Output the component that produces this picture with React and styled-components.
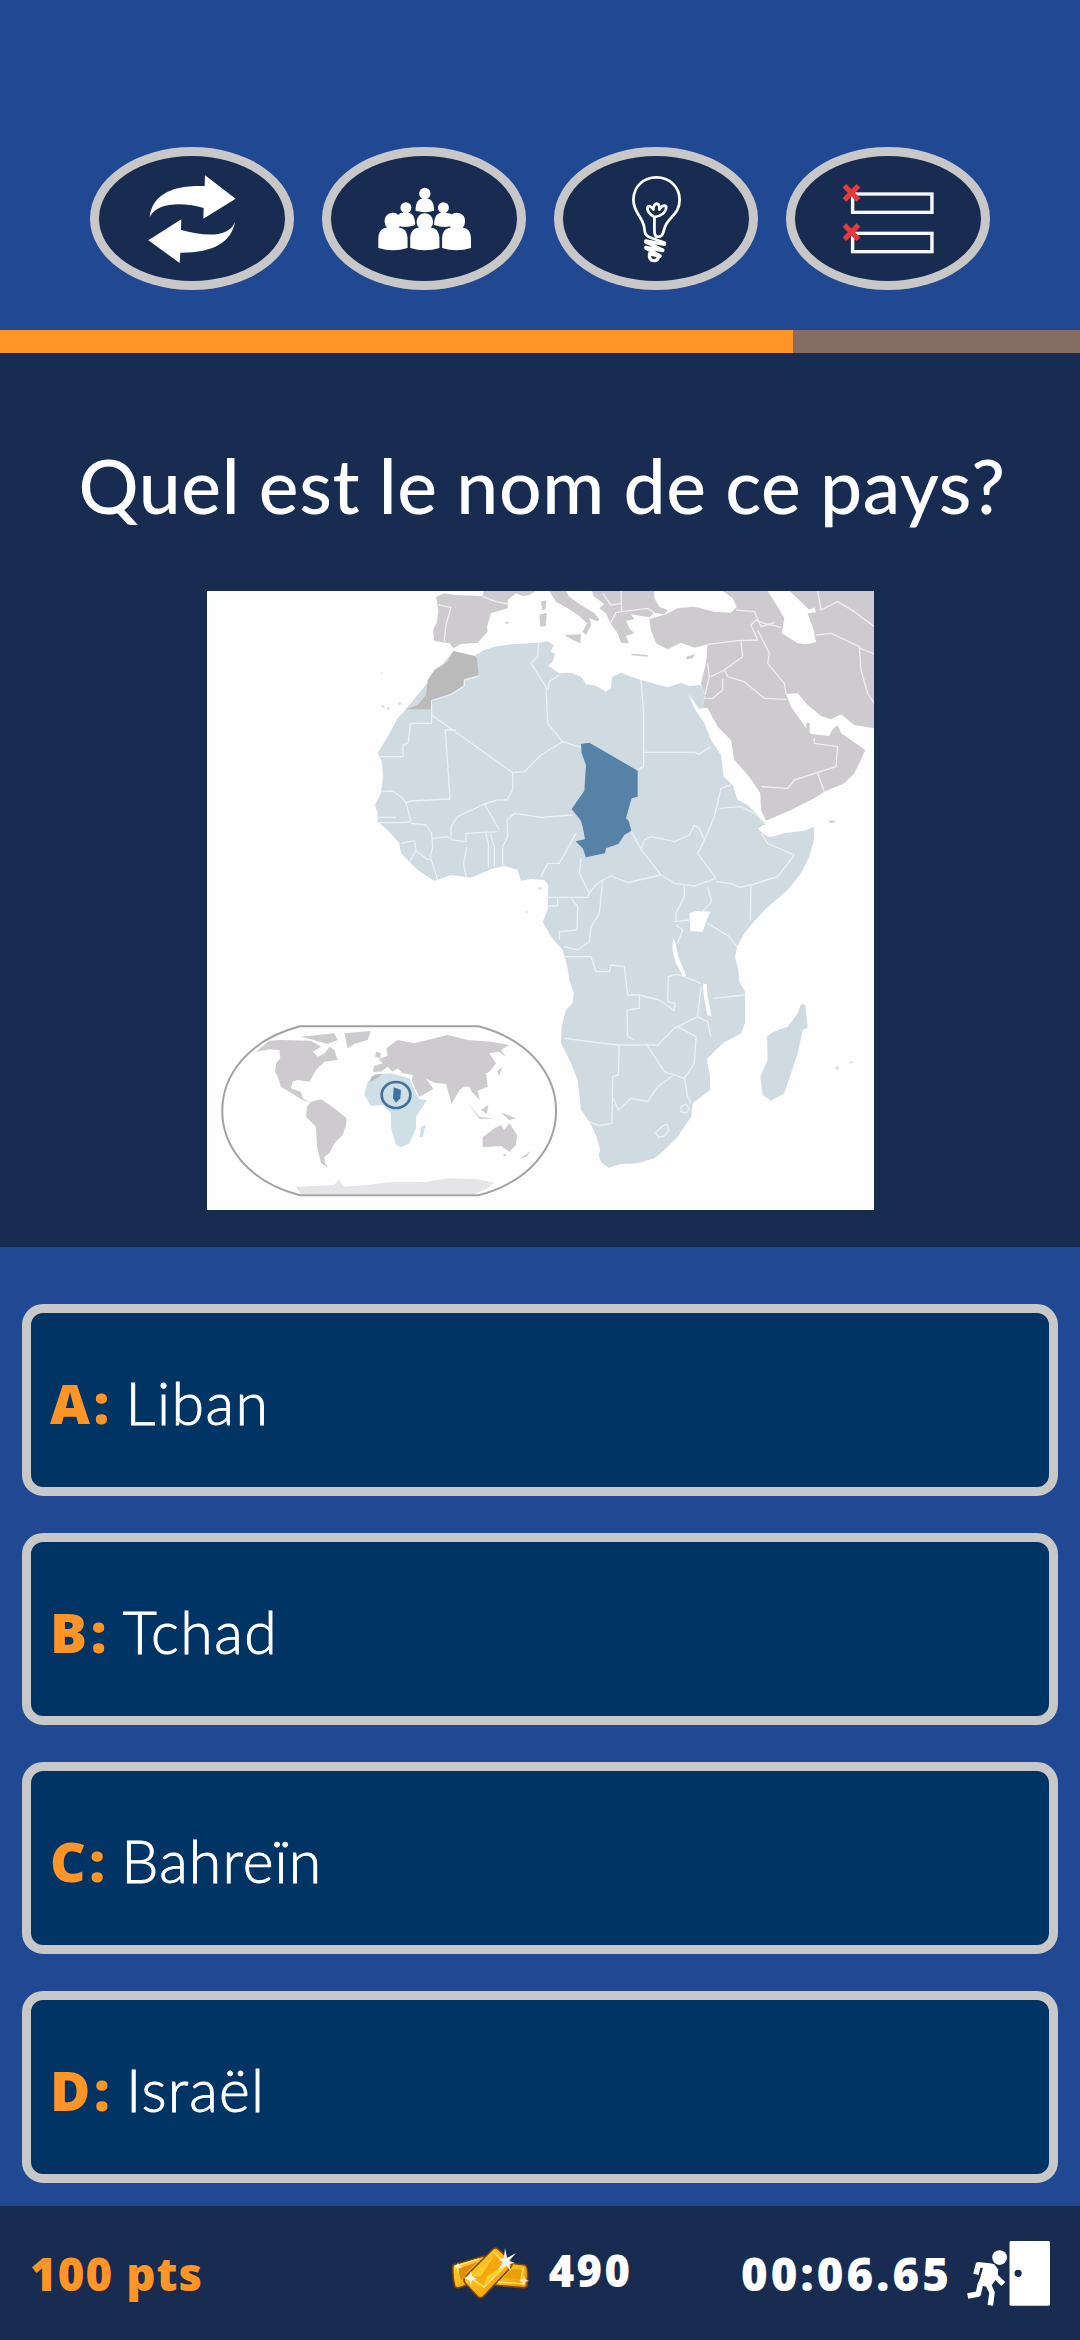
import React from "react";
import styled, { createGlobalStyle } from "styled-components";

const colors = {
  blue: "#214892",
  navy: "#182b50",
  panel: "#003465",
  silver: "#c8c8c8",
  orange: "#ff9427",
  track: "#866d63",
};

const GlobalStyle = createGlobalStyle`
  *, *::before, *::after { box-sizing: border-box; }
  body {
    margin: 0;
    background: ${colors.blue};
    font-family: Lato, "Open Sans", sans-serif;
    color: #fff;
  }
`;

const Screen = styled.main`
  width: 1080px;
  height: 2340px;
  display: flex;
  flex-direction: column;
  overflow: hidden;
  background: ${colors.blue};
`;

const Lifelines = styled.header`
  height: 330px;
  padding-top: 147px;
  display: flex;
  justify-content: center;
  align-items: flex-start;
  gap: 28px;
`;

const LifelineButton = styled.button`
  width: 204px;
  height: 143px;
  padding: 0;
  display: flex;
  align-items: center;
  justify-content: center;
  border: 9px solid ${colors.silver};
  border-radius: 50%;
  background: ${colors.navy};
`;

const Glyph = styled.svg`
  display: block;
  flex: none;
  width: ${(p) => p.$w}px;
  height: ${(p) => p.$h}px;
`;

const TimeTrack = styled.div`
  height: 23px;
  background: ${colors.track};
`;

const TimeFill = styled.div`
  height: 100%;
  background: ${colors.orange};
`;

const Question = styled.section`
  height: 894px;
  padding-top: 87px;
  display: flex;
  flex-direction: column;
  align-items: center;
  gap: 61px;
  background: ${colors.navy};
`;

const QuestionText = styled.h1`
  margin: 0;
  padding-left: 4px;
  font-size: 75px;
  font-weight: 500;
  line-height: 90px;
  letter-spacing: 0.65px;
  word-spacing: -1px;
  white-space: nowrap;
`;

const MapPicture = styled.svg`
  display: block;
  width: 667px;
  height: 619px;
  background: #fefefe;
`;

const Answers = styled.section`
  flex: 1;
  padding: 57px 22px 0;
  display: flex;
  flex-direction: column;
  gap: 37px;
`;

const AnswerButton = styled.button`
  height: 192px;
  padding: 5px 19px 0;
  display: flex;
  align-items: center;
  gap: 12.5px;
  border: 9px solid ${colors.silver};
  border-radius: 21px;
  background: ${colors.panel};
  color: #fff;
  font-family: inherit;
  text-align: left;
`;

const Letter = styled.span`
  color: ${colors.orange};
  font-family: "Open Sans", sans-serif;
  font-size: 55px;
  font-weight: 800;
  line-height: 70px;
  letter-spacing: 3.6px;
`;

const AnswerText = styled.span`
  font-size: 59px;
  font-weight: 300;
  line-height: 70px;
  letter-spacing: ${(p) => p.$tracking}px;
  -webkit-text-stroke: 0.9px #fff;
`;

const StatusBar = styled.footer`
  height: 134px;
  padding: 0 30px;
  display: grid;
  grid-template-columns: 1fr auto 1fr;
  align-items: center;
  background: ${colors.navy};
  font-family: "Open Sans", sans-serif;
  font-weight: 800;
  line-height: 56px;
`;

const Points = styled.span`
  color: ${colors.orange};
  font-size: 45.5px;
  letter-spacing: 1.1px;
`;

const Gold = styled.div`
  padding-left: 3px;
  display: flex;
  align-items: center;
  gap: 20px;
`;

const GoldAmount = styled.span`
  margin-top: -4px;
  font-size: 43.5px;
  letter-spacing: 2.4px;
`;

const TimeAndExit = styled.div`
  justify-self: end;
  display: flex;
  align-items: center;
  gap: 15px;
`;

const Timer = styled.span`
  font-size: 45.5px;
  letter-spacing: 3.1px;
`;

function SwapIcon() {
  return (
    <Glyph $w={92} $h={90} viewBox="199 130 276 270" fill="#fff">
      <path d="M210 259C218 195 270 163 375 166L376 134L468 204L371 264L372 232C320 216 235 210 210 259Z" />
      <path d="M466 274C455 335 400 367 302 366L300 397L206 329L305 266L304 298C370 315 445 325 466 274Z" />
    </Glyph>
  );
}

function CrowdIcon() {
  return (
    <Glyph $w={95} $h={66} viewBox="890 166 286 198" fill="#fff">
      <circle cx="1034" cy="188" r="17" />
      <path d="M1026 198h16v6c13 1 20 14 20 36q-28 9 -56 0c0-22 7-35 20-36Z" />
      <circle cx="977" cy="231" r="16.5" />
      <path d="M969 240h16v7c13 1 20 14 20 36q-26 9 -47 4q-16-30 3-40l8-1Z" />
      <circle cx="1090" cy="231" r="16.5" />
      <path d="M1082 240h16v7q16 0 22 10l-10 30q-22 6-48-4c0-22 7-35 20-36Z" />
      <g stroke={colors.navy} strokeWidth="3" paintOrder="stroke">
        <path d="M1009 273a25 25 0 1 1 50 0q0 10-7 18c18 1 26 14 26 34v27q-44 14-88 0v-27c0-20 8-33 26-34q-7-8-7-18Z" />
      </g>
      <path d="M913 273a25 25 0 0 1 42-20q12 22 1 38c18 1 26 14 26 34v27q-44 14-88 0v-27c0-20 8-33 26-34q-7-8-7-18Z" />
      <path d="M1155 273a25 25 0 0 0-42-20q-12 22-1 38c-18 1-26 14-26 34v27q43 14 87 0v-27c0-20-8-33-25-34q7-8 7-18Z" />
    </Glyph>
  );
}

function BulbIcon() {
  return (
    <Glyph
      $w={51}
      $h={90}
      viewBox="264 130 148 270"
      preserveAspectRatio="none"
      fill="none"
      stroke="#fff"
      strokeWidth="8"
      strokeLinecap="round"
      strokeLinejoin="round"
    >
      <path d="M338 318C354 320 357 310 360 297C367 260 405 255 405 208C405 168 375 140 338 140C300 140 271 168 271 208C271 245 297 258 302 288C304 305 304 315 318 320L362 336" />
      <path d="M338 318C332 314 332 308 332 300V259C318 252 308 238 313 228C318 224 325 230 329 237C328 226 334 219 339 219C345 220 347 229 346 237C350 228 362 220 366 228C367 245 350 258 332 259" />
      <path
        d="M307 331L361 341M307 334L356 358M307 350L356 360M308 353L348 375M318 369L348 377M318 370C316 382 321 390 331 390C340 390 344 384 342 378"
        strokeWidth="10"
      />
    </Glyph>
  );
}

function FiftyIcon() {
  return (
    <Glyph $w={91} $h={70} viewBox="880 161 265 210" preserveAspectRatio="none" fill="none">
      <g stroke="#f6f8fc" strokeWidth="10">
        <rect x="908" y="191" width="231" height="55" />
        <rect x="908" y="309" width="231" height="55" />
      </g>
      <g stroke="#e23b3c" strokeWidth="15">
        <path d="M884 166L925 209M925 166L884 209" />
        <path d="M884 284L925 327M925 284L884 327" />
      </g>
    </Glyph>
  );
}

function GoldIcon() {
  return (
    <Glyph $w={78} $h={53} viewBox="0 0 78 53">
      <defs>
        <linearGradient id="gold" x1="0" y1="0" x2="1" y2="1">
          <stop offset="0" stopColor="#ffd83a" />
          <stop offset="0.5" stopColor="#fbb71a" />
          <stop offset="1" stopColor="#e58c00" />
        </linearGradient>
      </defs>
      <g stroke="#7c4304" strokeWidth="1.6" strokeLinejoin="round">
        <path d="M2 18L33 9L38 31L7 41L4 40Q1 29 2 18Z" fill="url(#gold)" />
        <path d="M48 15L74 18Q78 20 76 39L74 41L42 38Z" fill="url(#gold)" />
        <path d="M42 2Q44 0 47 2L60 14Q62 17 60 20L33 49Q30 52 27 50L14 36Q12 33 14 30Z" fill="url(#gold)" />
      </g>
      <path d="M43 7L54 17L33 38L21 30Z" fill="#f6a70f" />
      <path d="M44 7L30 29L21 30ZM53 19L33 38L36 29Z" fill="#ffcf31" />
      <path d="M43 6L56 17L33 40L18 30" fill="none" stroke="#ffe56a" strokeWidth="1.600" />
      <path d="M7 22L27 15L15 26Q15 32 10 33Z" fill="#dc8d0b" />
      <path d="M59 22L71 23L70 32L52 31Z" fill="#e9a008" />
      <path d="M4 19L28 12M47 35L74 37M72 21L70 34" stroke="#ffe56a" strokeWidth="1.500" fill="none" />
      <g fill="#fff">
        <path d="M54 1L56 11L65 6L58 14L64 16L58 17L60 24L55 18L47 23L52 15L48 13L53 11Z" />
        <path d="M20 24L21 29L26 32L21 33L20 38L18 33L13 31L18 29Z" opacity="0.85" />
        <path d="M7 15L8 19L12 20L8 21L7 27L6 21L3 20L6 18Z" opacity="0.75" />
        <path d="M73 28L74 32L78 34L74 35L72 39L71 35L68 34L72 32Z" opacity="0.75" />
      </g>
    </Glyph>
  );
}

function ExitIcon() {
  return (
    <Glyph $w={83} $h={66} viewBox="1239 152 242 192" preserveAspectRatio="none" fill="#fff">
      <rect x="1363" y="155" width="118" height="188" rx="4" />
      <circle cx="1388" cy="249" r="10.5" fill={colors.navy} />
      <circle cx="1334" cy="203" r="21.500" />
      <g fill="none" stroke="#fff" strokeWidth="16" strokeLinecap="butt" strokeLinejoin="round">
        <path d="M1265 252L1272 224L1310 228L1322 258L1345 280" />
        <path d="M1306 228L1278 280L1272 309L1241 315" />
        <path d="M1298 275L1312 305L1307 342" />
      </g>
      <path d="M1288 223L1318 222L1330 238L1328 260L1306 290L1280 284L1276 268Z" />
    </Glyph>
  );
}

const africa =
  "M757 213L820 228L850 210L880 200L940 192L1015 188L1040 184L1058 195L1050 215L1062 222L1055 245L1042 258L1075 280L1110 278L1140 290L1155 312L1185 317L1215 335L1230 325L1233 290L1260 278L1290 290L1320 300L1355 310L1400 322L1440 308L1465 318L1500 315L1512 345L1505 385L1495 387L1462 342L1480 385L1510 430L1530 480L1560 525L1568 590L1595 615L1610 660L1640 675L1670 705L1693 733L1670 745L1690 765L1710 772L1750 760L1810 752L1838 740L1840 775L1825 830L1800 880L1760 930L1690 990L1650 1035L1630 1060L1608 1100L1602 1130L1612 1170L1615 1205L1632 1235L1632 1330L1620 1360L1565 1390L1517 1438L1527 1490L1527 1530L1475 1570L1470 1610L1430 1670L1390 1710L1360 1735L1310 1750L1260 1752L1222 1763L1200 1745L1193 1725L1198 1710L1185 1665L1165 1625L1140 1590L1130 1500L1110 1450L1080 1390L1082 1340L1095 1290L1115 1270L1118 1240L1105 1200L1100 1165L1085 1110L1050 1070L1025 1025L1040 990L1042 915L1030 900L990 897L960 902L950 870L910 857L870 868L810 893L750 885L700 903L650 870L600 820L595 790L560 750L530 725L530 700L522 675L540 640L546 590L543 545L530 520L560 470L590 415L615 388Z";

const africaBorders = [
  "M692 388V430H628L622 488L606 495V530H530",
  "M692 388V362L750 343L790 318V300L835 288",
  "M692 405L935 578L970 575L1020 525L1085 485",
  "M765 450H733L747 657L630 663L615 668M545 635L575 633L600 650L615 668L630 725",
  "M530 712H585M530 728H600L630 725M630 730L675 735L692 760L695 800L688 830L710 900",
  "M600 790L640 782L645 810L625 848M645 812L675 835L690 840",
  "M695 775L740 770L755 780L795 785V760L890 755M750 770V740L770 710L850 672L890 660H918L935 630V578",
  "M850 672L870 705L895 750M798 800L788 850L795 890M855 760L862 790V860M868 762L880 800V860M905 860V800L920 770L918 720L940 700L1020 712L1115 705",
  "M1013 190L1010 230L990 250L1035 320L1040 430L1085 485L1140 502M1040 330L1045 305L1075 285",
  "M1320 300L1328 400V560L1308 570M1330 517H1480L1495 522L1530 500",
  "M1125 760L1075 850H1040L1020 890M1140 835L1135 880L1165 940L1180 920L1205 900L1230 888L1280 908L1380 885",
  "M1290 752L1320 808L1380 885L1420 910L1480 918L1545 895",
  "M1320 808L1330 780L1350 770L1420 785L1465 765L1480 735L1495 745L1510 780L1490 820L1545 895M1510 780L1540 710L1560 625L1588 615M1555 685L1620 680L1660 700L1693 730",
  "M1680 760L1700 790L1780 825L1730 890L1650 915L1615 922L1590 910L1545 905M1650 915L1648 1020",
  "M1450 918V950L1425 1000V1025M1520 920L1532 965L1505 995M1205 900L1195 1000L1170 1040L1165 1085L1130 1110L1090 1100",
  "M1040 952H1160L1170 930M1110 955L1130 980L1128 1050L1075 1055V1080M1040 978H1070V952",
  "M1090 1130H1170L1185 1175H1225L1230 1155L1270 1160L1280 1245L1315 1245V1285L1278 1290L1280 1370L1300 1380",
  "M1315 1245L1375 1260L1420 1292L1422 1270L1400 1265L1402 1190L1425 1183L1445 1188L1500 1210",
  "M1090 1375L1210 1390L1255 1395H1370L1420 1345L1490 1310L1520 1325L1530 1370M1255 1395L1252 1485L1235 1490L1233 1630L1195 1637L1165 1625",
  "M1335 1390L1390 1475L1450 1495L1480 1450L1485 1370L1430 1340M1450 1495L1460 1550L1470 1570",
  "M1235 1550L1252 1590L1290 1555L1340 1565L1370 1520L1415 1488",
  "M1535 1255L1632 1245M1520 1030L1585 1070L1608 1100M1490 1310L1500 1220M1420 1025L1465 1020M1425 1035L1445 1050L1430 1090",
  "M1382 1640L1398 1632L1404 1650L1390 1668L1372 1672L1364 1658ZM1440 1580L1455 1572L1465 1586L1455 1599L1440 1596Z",
];

const eurasia = [
  "M705 50L730 40L760 45L845 48L848 33H1005L985 45L965 48L945 40L920 60V85L870 100L858 140L860 155L830 188L780 192L757 204L745 190L700 183L696 150L708 125L712 90Z",
  "M1045 33H1095L1105 50L1140 75L1180 100L1195 118L1190 124L1165 115L1170 135L1155 165L1145 155L1158 130L1135 108L1100 85L1065 65Z",
  "M1090 165L1140 163L1138 190L1115 180ZM1015 105L1037 98L1035 138L1018 140ZM1020 65L1036 60L1034 88L1023 90Z",
  "M1172 33H1360V55L1375 80L1400 90L1390 103L1360 98L1345 112L1290 103L1300 118L1275 122L1285 145L1300 160L1275 168L1283 190L1260 188L1250 160L1228 130L1215 100L1195 85L1210 72L1180 50Z",
  "M1345 117L1395 103L1430 85L1480 80L1540 95L1590 98L1607 80L1595 55L1565 33H1700L1730 80L1750 115L1742 160L1790 190L1815 193L1845 187L1838 150L1820 100L1845 97L1840 82L1825 90L1805 70L1765 33H2020V445L1960 435L1920 403L1890 418L1860 408L1820 375L1790 340L1755 342L1770 380L1805 430L1830 462L1885 468L1895 448L1910 435L1920 460L1950 480L1993 510L1975 550L1960 580L1930 610L1870 635L1840 655L1770 690L1695 722L1680 690L1678 640L1645 590L1600 540L1590 480L1550 440L1520 385L1505 383L1512 345L1500 310L1515 250L1520 193L1480 203L1440 188L1400 208L1365 190L1350 150Z",
  "M1455 230L1482 222L1475 235L1458 238ZM1290 221L1340 225V230L1292 226ZM1815 430L1826 428V458L1818 456ZM910 127L922 124L920 133ZM1882 722h22l-6 6h-12Z",
];

const eurasiaBorders =
  "M712 75L750 82L735 135L730 183M845 50L885 65L920 72M1520 193L1610 182L1670 180L1650 135L1665 120L1690 130L1740 142M1670 150L1705 220L1700 250L1750 310L1755 342M1570 270L1625 230L1620 185M1530 290L1570 270L1580 290L1630 305L1690 355L1755 358M1565 295V330L1535 355H1505M1512 345L1525 290L1520 250M1680 620L1760 625L1780 600L1905 560L1910 500L1840 490V475M1850 580L1870 635M1845 165L1890 160L1975 200L1980 270L2000 340L2020 370M1978 205L2020 222M1850 33L1860 90L1910 65L1960 95L2020 140M1605 90L1660 95L1680 140L1720 128M1260 33L1262 95M1262 95L1340 85L1360 98M1205 40L1230 75L1262 70M1228 130L1245 98L1262 95";

const insetLand =
  "M165 485L205 452L240 450L330 452L360 470L335 485L350 500L372 490L385 470L400 480L410 510L370 515L345 540L325 575L290 570L275 575L270 595L300 605L305 625L330 640L300 628L265 605L240 590L230 560L222 545L225 520L238 505L235 480L205 478ZM300 440L400 430L410 450L380 462L330 448ZM430 430L510 423L500 450L460 462L440 475L435 450ZM330 635L360 628L400 655L437 685L435 705L425 735L400 760L385 790L370 800L372 820L382 833L360 820L348 770L345 710L315 680L318 650ZM515 545L520 528L545 520L533 508L560 497L556 475L590 450L640 460L680 450L740 435L800 450L870 455L925 465L900 480L915 500L895 485L865 490L885 520L865 545L855 550L860 590L830 602L836 630L812 605L805 590L790 590L775 600L752 642L740 600L735 582L700 578L675 565L697 597L655 620L640 590L632 570L636 555L605 550L590 535L575 545L560 530L540 545ZM525 485L540 490L538 505L522 500ZM845 742L880 715L900 705L910 720L925 700L948 735L945 765L925 785L900 768L845 772ZM800 640L835 680L880 686L835 686ZM840 660L862 645L858 672ZM900 668L945 685L925 690ZM888 545L903 530L895 558ZM955 806L992 782L975 800ZM908 792h6v6h-6ZM518 560L540 550L530 572L508 575Z";

const chad =
  "M1140 492L1165 488L1310 572V650L1292 655L1275 715L1283 722L1291 752L1270 765L1252 792L1215 805L1212 820L1155 832L1145 805L1124 784L1152 778L1145 740L1140 722L1112 687L1150 632L1155 555L1142 520Z";

function AfricaMap() {
  return (
    <MapPicture viewBox="18 33 2001 1857" preserveAspectRatio="none" role="img" aria-label="Tchad">
      <g fill="#cdcbcd">
        {eurasia.map((d) => (
          <path key={d} d={d} />
        ))}
      </g>
      <path d={eurasiaBorders} fill="none" stroke="#f0eff1" strokeWidth="4" strokeLinejoin="round" />
      <path d={africa} fill="#cfdae1" />
      <path d="M757 213L820 228L828 235L833 288L790 300V318L750 343L695 362L692 388H612L650 375L675 345L680 300L700 270L740 245Z" fill="#bbbabb" />
      <path d="M1712 1358L1760 1340L1790 1300L1800 1272L1813 1275L1820 1343L1805 1350L1790 1420L1750 1540L1710 1562L1685 1545L1678 1490L1700 1440L1698 1370Z" fill="#cfdae1" />
      <g fill="none" stroke="#eaf1f5" strokeWidth="4" strokeLinejoin="round">
        {africaBorders.map((d) => (
          <path key={d} d={d} />
        ))}
      </g>
      <g fill="#fefefe">
        <path d="M1465 1000L1485 993L1528 995L1515 1025L1505 1055L1468 1054Z" />
        <path d="M1416 1070L1424 1090L1432 1130L1456 1188L1445 1188L1425 1150L1414 1110Z" />
        <path d="M1505 1210L1517 1213L1520 1250L1532 1310L1520 1305L1510 1260Z" />
      </g>
      <path d={chad} fill="#5682a7" />
      <g fill="#e2e2e4">
        <circle cx="545" cy="379" r="5" />
        <circle cx="562" cy="385" r="4" />
        <circle cx="596" cy="370" r="5" />
        <circle cx="542" cy="278" r="3" />
        <circle cx="976" cy="996" r="4" />
        <circle cx="1016" cy="925" r="5" />
        <circle cx="1909" cy="1464" r="6" />
        <circle cx="1950" cy="1447" r="4" />
      </g>
      <g transform="translate(0 930)">
        <path d="M285 890L400 885L413 868L430 890L500 885L560 877L680 875L740 865L830 868L880 878L860 895L820 912H300Z" fill="#e5e5e7" />
        <path d={insetLand} fill="#cdcbcd" />
        <path d="M520 553L570 550L625 565L640 600L655 628L678 630L645 680V715L625 760L600 772L585 765L570 715V670L545 645L510 648L490 615L500 575ZM660 710L674 705L665 742L656 740Z" fill="#cfdfe6" />
        <path d="M512 560L530 553L545 552L525 566L508 576Z" fill="#bbbabb" />
        <path d="M578 592L600 600L598 625L585 638L576 625Z" fill="#3c73a4" />
        <ellipse cx="585" cy="615" rx="43" ry="39" fill="none" stroke="#447199" strokeWidth="8" />
        <path d="M297 409H832C1143 490 1143 835 832 916H297C-14 835 -14 490 297 409Z" fill="none" stroke="#a2a2a4" strokeWidth="6" />
      </g>
    </MapPicture>
  );
}

const answers = [
  { letter: "A", text: "Liban", tracking: 1.5 },
  { letter: "B", text: "Tchad", tracking: 1.5 },
  { letter: "C", text: "Bahreïn", tracking: 1.1 },
  { letter: "D", text: "Israël", tracking: 1.2 },
];

const lifelines = [
  { label: "Changer de question", Icon: SwapIcon },
  { label: "Avis du public", Icon: CrowdIcon },
  { label: "Indice", Icon: BulbIcon },
  { label: "50:50", Icon: FiftyIcon },
];

export default function App() {
  const remaining = 793 / 1080;
  return (
    <>
      <GlobalStyle />
      <Screen>
        <Lifelines>
          {lifelines.map(({ label, Icon }) => (
            <LifelineButton key={label} aria-label={label}>
              <Icon />
            </LifelineButton>
          ))}
        </Lifelines>
        <TimeTrack>
          <TimeFill style={{ width: `${remaining * 100}%` }} />
        </TimeTrack>
        <Question>
          <QuestionText>Quel est le nom de ce pays?</QuestionText>
          <AfricaMap />
        </Question>
        <Answers>
          {answers.map(({ letter, text, tracking }) => (
            <AnswerButton key={letter}>
              <Letter>{letter}:</Letter>
              <AnswerText $tracking={tracking}>{text}</AnswerText>
            </AnswerButton>
          ))}
        </Answers>
        <StatusBar>
          <Points>100 pts</Points>
          <Gold>
            <GoldIcon />
            <GoldAmount>490</GoldAmount>
          </Gold>
          <TimeAndExit>
            <Timer>00:06.65</Timer>
            <ExitIcon />
          </TimeAndExit>
        </StatusBar>
      </Screen>
    </>
  );
}
